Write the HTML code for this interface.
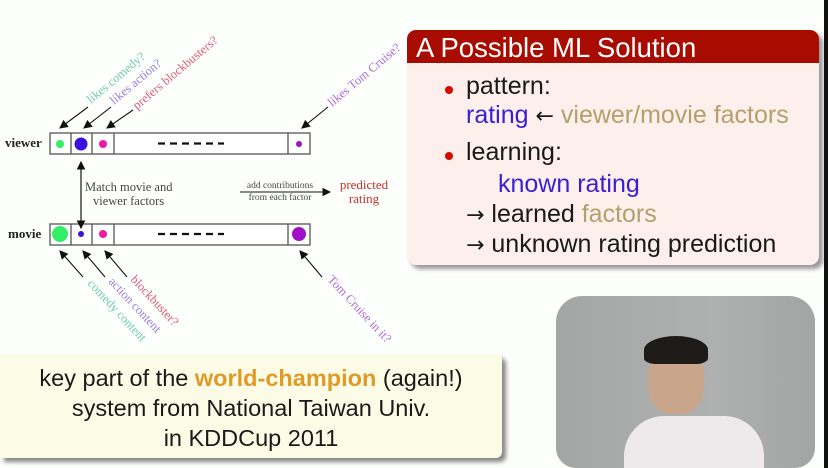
<!DOCTYPE html>
<html><head><meta charset="utf-8"><style>
html,body{margin:0;padding:0}
body{width:828px;height:468px;overflow:hidden;background:#fdfffd;position:relative;font-family:"Liberation Sans",sans-serif}
.strip{position:absolute;right:0;top:0;width:4px;height:468px;background:#111}
.rb{position:absolute;left:407px;top:30px;width:412px;height:235px;border-radius:9px;background:#fcefec;box-shadow:4px 4px 4px #999;overflow:hidden}
.rb .h{background:#a80c00;color:#fff;font-size:27.5px;height:33px;line-height:35px;padding-left:9px}
.rb .t{position:absolute;font-size:25px;color:#1a1a1a;white-space:nowrap}
.ar{font-family:"DejaVu Sans",sans-serif;font-size:22px}
.dot{position:absolute;width:8px;height:8px;border-radius:50%;background:#d40a00}
.blue{color:#3a1fd0}.tan{color:#b3a06a}
.yb{position:absolute;left:0;top:354px;width:502px;height:104px;border-radius:0 6px 6px 0;background:#fcfce6;box-shadow:4px 4px 4px #888;text-align:center;font-size:23.5px;line-height:30px;color:#1a1a1a;padding-top:9px;box-sizing:border-box}
.vid{position:absolute;left:556px;top:296px;width:259px;height:172px;border-radius:26px 26px 20px 20px;background:linear-gradient(90deg,#a3a6a5,#aeb1b0 60%,#a2a5a4);overflow:hidden}
</style></head><body>
<svg width="400" height="350" style="position:absolute;left:0;top:0" font-family="Liberation Serif,serif">
<defs><marker id="a" markerWidth="8" markerHeight="8" refX="7" refY="4" orient="auto"><path d="M0,0 L8,4 L0,8 z" fill="#111"/></marker></defs>
<g stroke="#555" fill="#fff" stroke-width="1.3">
<rect x="50" y="133" width="260" height="21"/><rect x="50" y="224" width="260" height="21"/>
<path d="M71 133v21M92 133v21M114 133v21M288 133v21M71 224v21M92 224v21M114 224v21M288 224v21"/>
</g>
<g stroke="#111" stroke-width="2.2"><path d="M158 143.5h66" stroke-dasharray="7,5"/><path d="M158 234h66" stroke-dasharray="7,5"/></g>
<circle cx="60" cy="144" r="4" fill="#33ee66"/><circle cx="81" cy="144" r="6.5" fill="#3a10e0"/><circle cx="103" cy="144" r="4" fill="#f018a0"/><circle cx="299" cy="144" r="3" fill="#a010c8"/>
<circle cx="60" cy="234" r="8" fill="#33ee66"/><circle cx="81" cy="234" r="3" fill="#3a10e0"/><circle cx="103" cy="234" r="4" fill="#f018a0"/><circle cx="299" cy="234" r="7" fill="#a010c8"/>
<text x="5" y="147" font-size="13" font-weight="bold" fill="#222">viewer</text>
<text x="8" y="238" font-size="13" font-weight="bold" fill="#222">movie</text>
<g stroke="#111" stroke-width="1.1" marker-end="url(#a)">
<path d="M88 107L60 128"/><path d="M111 107L84 128"/><path d="M133 110L107 128"/><path d="M328 107L302 128"/>
<path d="M81 228V162"/><path d="M81 162V228"/>
<path d="M240 192H330"/>
<path d="M83 277L60 251"/><path d="M105 277L83 251"/><path d="M127 277L105 251"/><path d="M322 277L300 251"/>
</g>
<g font-size="12.5">
<text transform="translate(91,104) rotate(-40)" fill="#6ccfa8">likes comedy?</text>
<text transform="translate(114,105) rotate(-40)" fill="#9a7ae8">likes action?</text>
<text transform="translate(137,110) rotate(-40)" fill="#e05a78">prefers blockbusters?</text>
<text transform="translate(332,107) rotate(-40)" fill="#b06ae0">likes Tom Cruise?</text>
<text transform="translate(87,284) rotate(47)" fill="#6ccfa8">comedy content</text>
<text transform="translate(108,282) rotate(47)" fill="#9a7ae8">action content</text>
<text transform="translate(130,280) rotate(47)" fill="#e05a78">blockbuster?</text>
<text transform="translate(327,280) rotate(47)" fill="#b06ae0">Tom Cruise in it?</text>
<text x="85" y="191" fill="#444" font-size="12.5">Match movie and</text>
<text x="93" y="205" fill="#444" font-size="12.5">viewer factors</text>
<text x="280" y="188" fill="#444" font-size="9.5" text-anchor="middle">add contributions</text>
<text x="280" y="200" fill="#444" font-size="9.5" text-anchor="middle">from each factor</text>
<text x="364" y="189" fill="#c8302a" font-size="13" text-anchor="middle">predicted</text>
<text x="364" y="203" fill="#c8302a" font-size="13" text-anchor="middle">rating</text>
</g>
</svg>
<div class="rb"><div class="h">A Possible ML Solution</div>
<div class="dot" style="left:38px;top:56px"></div><div class="t" style="left:59px;top:42px">pattern:</div>
<div class="t" style="left:59px;top:71px"><span class="blue">rating</span> <span class="ar">←</span> <span class="tan">viewer/movie factors</span></div>
<div class="dot" style="left:38px;top:122px"></div><div class="t" style="left:59px;top:108px">learning:</div>
<div class="t" style="left:91px;top:140px"><span class="blue">known rating</span></div>
<div class="t" style="left:59px;top:170px"><span class="ar">→</span> learned <span class="tan">factors</span></div>
<div class="t" style="left:59px;top:200px"><span class="ar">→</span> unknown rating prediction</div>
</div>
<div class="yb">key part of the <b style="color:#e09a28">world-champion</b> (again!)<br>system from National Taiwan Univ.<br>in KDDCup 2011</div>
<div class="vid">
<div style="position:absolute;left:92px;top:48px;width:56px;height:70px;border-radius:45% 45% 40% 40%;background:#c9a58c"></div>
<div style="position:absolute;left:88px;top:40px;width:64px;height:28px;border-radius:50% 50% 20% 20%;background:#1e1a18"></div>
<div style="position:absolute;left:68px;top:120px;width:140px;height:60px;border-radius:40px 40px 0 0;background:#eeeaec"></div>
</div>
<div class="strip"></div>
</body></html>
